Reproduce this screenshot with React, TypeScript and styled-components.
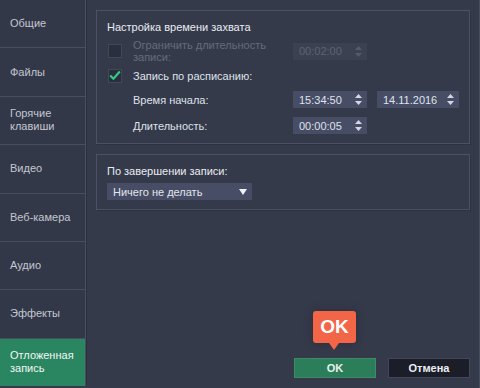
import React from "react";
import styled, { createGlobalStyle } from "styled-components";

const GlobalStyle = createGlobalStyle`
  html, body {
    margin: 0;
    padding: 0;
    background: #353a4b;
  }
  * {
    box-sizing: border-box;
  }
`;

const Window = styled.div`
  width: 480px;
  height: 388px;
  display: flex;
  background: #353a4b;
  font-family: "Liberation Sans", Arial, sans-serif;
  font-size: 11px;
  color: #d9dce4;
  overflow: hidden;
  border-right: 1px solid #474c5e;
`;

const Sidebar = styled.div`
  width: 86px;
  height: 386px;
  display: flex;
  flex-direction: column;
  background: #333848;
  border-right: 1px solid #4a4f61;
  box-shadow: 1px 0 0 #2c303e;
`;

const NavItem = styled.div<{ $active?: boolean }>`
  flex: 1;
  display: flex;
  align-items: center;
  padding: 0 10px;
  line-height: 13px;
  color: ${(p) => (p.$active ? "#f2f6f4" : "#c3c7d2")};
  background: ${(p) => (p.$active ? "#2a8661" : "transparent")};
  border-bottom: 1px solid #484d5f;
  &:last-child {
    border-bottom: none;
  }
`;

const Main = styled.div`
  flex: 1;
  display: flex;
  flex-direction: column;
  padding: 10px 9px 10px 9px;
  margin-left: 1px;
`;

const Panel = styled.div<{ $gap?: number }>`
  border: 1px solid #4c5165;
  box-shadow: 1px 1px 0 #2d3140;
  padding: 10px 10px 9px 10px;
  margin-top: ${(p) => p.$gap ?? 0}px;
`;

const Title = styled.div`
  line-height: 13px;
  color: #e9ebf0;
`;

const Row = styled.div<{ $top: number; $h: number }>`
  display: grid;
  grid-template-columns: 26px 160px 84px 82px;
  align-items: center;
  height: ${(p) => p.$h}px;
  margin-top: ${(p) => p.$top}px;
`;

const Label = styled.div<{ $disabled?: boolean; $col?: number }>`
  grid-column: ${(p) => p.$col ?? 2};
  line-height: 12px;
  color: ${(p) => (p.$disabled ? "#666b7b" : "#dfe2e9")};
`;

const Box = styled.div<{ $checked?: boolean }>`
  width: 14px;
  height: 14px;
  margin-left: 1px;
  background: #2b2f3d;
  border: 1px solid #434858;
  display: flex;
  align-items: center;
  justify-content: center;
  overflow: visible;
`;

const Spin = styled.div<{ $disabled?: boolean; $w: number; $col: number }>`
  grid-column: ${(p) => p.$col};
  width: ${(p) => p.$w}px;
  height: 17px;
  display: flex;
  align-items: center;
  justify-content: space-between;
  padding: 0 5px 0 6px;
  background: ${(p) => (p.$disabled ? "#3c4152" : "#474d64")};
  color: ${(p) => (p.$disabled ? "#5c6172" : "#dfe3ec")};
`;

const Select = styled.div`
  width: 145px;
  height: 17px;
  margin-top: 5px;
  display: flex;
  align-items: center;
  justify-content: space-between;
  padding: 0 5px 0 6px;
  background: #474d64;
  color: #e3e6ee;
`;

const Footer = styled.div`
  margin-top: auto;
  display: flex;
  justify-content: flex-end;
  gap: 12px;
`;

const Button = styled.div<{ $primary?: boolean }>`
  position: relative;
  width: 82px;
  height: 20px;
  display: flex;
  align-items: center;
  justify-content: center;
  font-weight: bold;
  color: ${(p) => (p.$primary ? "#e8f3ee" : "#eceef3")};
  background: ${(p) => (p.$primary ? "#2c7d5a" : "#1b1e29")};
  border: 1px solid ${(p) => (p.$primary ? "#3a8d68" : "#434858")};
`;

const Tip = styled.div`
  position: absolute;
  left: 18px;
  bottom: 34px;
  width: 43px;
  height: 32px;
  border-radius: 3px;
  background: #f26547;
  color: #ffffff;
  font-size: 19px;
  font-weight: bold;
  display: flex;
  align-items: center;
  justify-content: center;
  box-shadow: 0 0 10px rgba(0, 0, 0, 0.25);
  &::after {
    content: "";
    position: absolute;
    left: 16px;
    bottom: -7px;
    border-left: 5px solid transparent;
    border-right: 5px solid transparent;
    border-top: 7px solid #f26547;
  }
`;

const Arrows = ({ color }: { color: string }) => (
  <svg width="7" height="11" viewBox="0 0 7 11">
    <path d="M3.5 0 L7 4 L0 4 Z" fill={color} />
    <path d="M0 7 L7 7 L3.5 11 Z" fill={color} />
  </svg>
);

const Check = () => (
  <svg width="15" height="13" viewBox="0 0 15 13" style={{ marginTop: -2 }}>
    <path d="M1.5 6.5 L5.5 10.5 L13.5 1.5" stroke="#2fd08a" strokeWidth="2.6" fill="none" />
  </svg>
);

const Caret = () => (
  <svg width="8" height="6" viewBox="0 0 8 6">
    <path d="M0 0 L8 0 L4 6 Z" fill="#f0f2f6" />
  </svg>
);

const navItems = [
  "Общие",
  "Файлы",
  "Горячие клавиши",
  "Видео",
  "Веб-камера",
  "Аудио",
  "Эффекты",
  "Отложенная запись",
];

const App = () => {
  return (
    <Window>
      <GlobalStyle />
      <Sidebar>
        {navItems.map((item, i) => (
          <NavItem key={item} $active={i === navItems.length - 1}>
            {item === "Горячие клавиши" ? (
              <span>
                Горячие
                <br />
                клавиши
              </span>
            ) : item === "Отложенная запись" ? (
              <span>
                Отложенная
                <br />
                запись
              </span>
            ) : (
              item
            )}
          </NavItem>
        ))}
      </Sidebar>
      <Main>
        <Panel>
          <Title>Настройка времени захвата</Title>
          <Row $top={5} $h={24}>
            <Box />
            <Label $disabled>
              Ограничить длительность
              <br />
              записи:
            </Label>
            <Spin $disabled $w={74} $col={3}>
              00:02:00
              <Arrows color="#555a6b" />
            </Spin>
          </Row>
          <Row $top={6} $h={14}>
            <Box $checked>
              <Check />
            </Box>
            <Label>Запись по расписанию:</Label>
          </Row>
          <Row $top={8} $h={17}>
            <Label>Время начала:</Label>
            <Spin $w={74} $col={3}>
              15:34:50
              <Arrows color="#d4d8e2" />
            </Spin>
            <Spin $w={82} $col={4}>
              14.11.2016
              <Arrows color="#d4d8e2" />
            </Spin>
          </Row>
          <Row $top={9} $h={17}>
            <Label>Длительность:</Label>
            <Spin $w={74} $col={3}>
              00:00:05
              <Arrows color="#d4d8e2" />
            </Spin>
          </Row>
        </Panel>
        <Panel $gap={10}>
          <Title>По завершении записи:</Title>
          <Select>
            Ничего не делать
            <Caret />
          </Select>
        </Panel>
        <Footer>
          <Button $primary>
            OK
            <Tip>OK</Tip>
          </Button>
          <Button>Отмена</Button>
        </Footer>
      </Main>
    </Window>
  );
};

export default App;
